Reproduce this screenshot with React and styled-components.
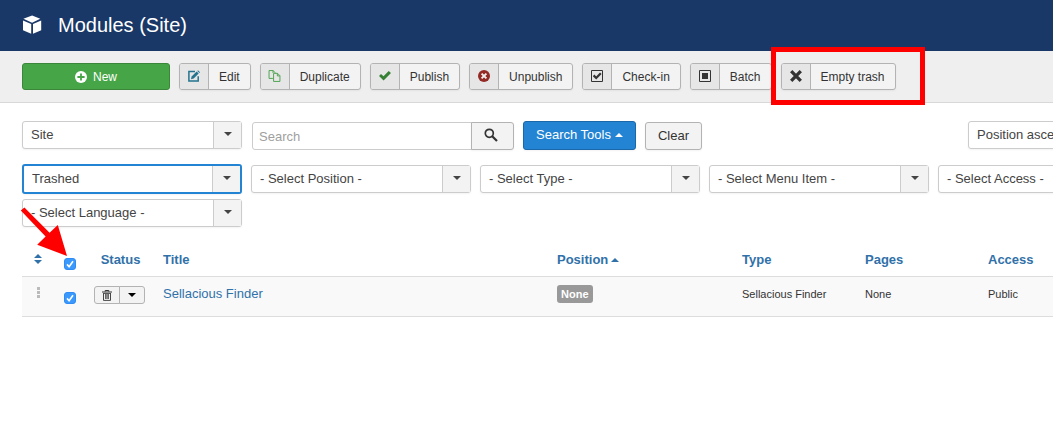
import React, { useState } from 'react'
import styled, { createGlobalStyle } from 'styled-components'

const GlobalStyle = createGlobalStyle`
    * {
        box-sizing: border-box;
    }

    html {
        overflow-x: hidden;
    }

    body {
        margin: 0;
        background: #fff;
        color: #333;
        font-family: "Liberation Sans", "Helvetica Neue", Arial, sans-serif;
        font-size: 13px;
        line-height: 18px;
    }

    button, input, select {
        font-family: inherit;
        font-size: 13px;
        margin: 0;
    }

    a {
        color: #3071a9;
        text-decoration: none;
    }

    svg {
        display: block;
    }
`

const Page = styled.div`
    min-width: 1210px;
`

const Header = styled.header`
    display: flex;
    align-items: center;
    gap: 16px;
    height: 51px;
    padding: 0 22px 2px;
    background: #1a3867;
    color: #fff;

    h1 {
        margin: 0;
        font-size: 20px;
        line-height: 24px;
        font-weight: normal;
    }
`

const Toolbar = styled.nav`
    display: flex;
    gap: 9px;
    padding: 12px 22px;
    background: #efefef;
    border-bottom: 1px solid #d8d8d8;
`

const NewButton = styled.button`
    display: flex;
    align-items: center;
    justify-content: center;
    gap: 6px;
    width: 148px;
    height: 27px;
    padding: 0;
    border: 1px solid #3a873a;
    border-radius: 3px;
    background: #46a546;
    color: #fff;
    font-size: 12px;
    cursor: pointer;
`

const ToolButton = styled.button`
    display: flex;
    height: 27px;
    padding: 0;
    border: 1px solid #b3b3b3;
    border-radius: 3px;
    background: #f3f3f3;
    color: #333;
    font-size: 12px;
    line-height: 27px;
    box-shadow: 0 1px 2px rgba(0, 0, 0, 0.05);
    cursor: pointer;
    overflow: hidden;
`

const ToolIcon = styled.span`
    display: flex;
    align-items: flex-start;
    justify-content: center;
    width: 29px;
    height: 25px;
    padding-top: 6px;
    border-right: 1px solid #b3b3b3;
    background: #e6e6e6;
    color: ${props => props.$color || '#333'};
`

const ToolLabel = styled.span`
    padding: 0 10px;
`

const Marked = styled.div`
    position: relative;

    &::after {
        content: '';
        position: absolute;
        top: -16px;
        right: -29px;
        bottom: -15px;
        left: -10px;
        border: 5px solid #f00;
        pointer-events: none;
    }
`

const Content = styled.main`
    padding: 18px 22px;
`

const SearchRow = styled.form`
    display: flex;
    align-items: flex-start;
    gap: 10px;
`

const SearchGroup = styled.div`
    display: flex;
    align-items: flex-end;
    gap: 9px;
    margin-right: auto;
`

const SearchBox = styled.div`
    display: flex;

    input {
        width: 220px;
        height: 28px;
        padding: 0 6px;
        border: 1px solid #ccc;
        border-radius: 3px 0 0 3px;
        color: #444;
        outline: none;
    }

    input::placeholder {
        color: #a0a0a0;
    }

    button {
        width: 43px;
        margin-left: -1px;
        padding: 0 0 3px 12px;
        border-radius: 0 3px 3px 0;
    }
`

const Button = styled.button`
    display: flex;
    align-items: center;
    gap: 4px;
    height: ${props => (props.$primary ? '29px' : '28px')};
    padding: 0 12px 2px;
    border: 1px solid ${props => (props.$primary ? '#1a68a8' : '#b3b3b3')};
    border-radius: 3px;
    background: ${props => (props.$primary ? '#2384d3' : '#f3f3f3')};
    color: ${props => (props.$primary ? '#fff' : '#333')};
    box-shadow: 0 1px 2px rgba(0, 0, 0, 0.05);
    cursor: pointer;
`

const Caret = styled.span`
    display: inline-block;
    border: 4px solid transparent;
    ${props => (props.$up
        ? 'border-top: 0; border-bottom-color: currentColor;'
        : 'border-bottom: 0; border-top-color: currentColor;')}
`

const Filters = styled.div`
    display: flex;
    flex-wrap: wrap;
    align-items: center;
    gap: 5px 9px;
    margin-top: 14px;
`

const SelectWrap = styled.div`
    display: grid;
    width: 220px;
    height: ${props => (props.$active ? '30px' : '28px')};
    border: ${props => (props.$active ? '2px solid #2384d3' : '1px solid #ccc')};
    border-radius: 3px;
    background: #fff;
    color: #444;
    box-shadow: 0 1px 2px rgba(0, 0, 0, 0.05);

    select {
        grid-area: 1 / 1;
        width: 100%;
        padding: 0 36px 2px 8px;
        border: 0;
        background: none;
        color: inherit;
        appearance: none;
        outline: none;
    }
`

const SelectArrow = styled.span`
    grid-area: 1 / 1;
    justify-self: end;
    display: flex;
    align-items: center;
    justify-content: center;
    width: 28px;
    padding-bottom: 2px;
    border-left: 1px solid #ccc;
    background: #f3f3f3;
    pointer-events: none;
`

const TableArea = styled.div`
    position: relative;
    margin-top: 15px;
`

const ArrowMark = styled.svg`
    position: absolute;
    top: -37px;
    left: -4px;
    pointer-events: none;
`

const Table = styled.table`
    width: 100%;
    table-layout: fixed;
    border-collapse: separate;
    border-spacing: 0;

    th, td {
        padding: 8px 8px 0;
        text-align: left;
        vertical-align: top;
        border-bottom: 1px solid #ddd;
    }

    th {
        height: 35px;
        padding-top: 9px;
    }

    td {
        height: 40px;
        background: #f9f9f9;
    }
`

const Col = styled.col`
    width: ${props => props.$width};
`

const Centered = styled.div`
    display: flex;
    justify-content: center;
`

const SortIcon = styled.button`
    display: flex;
    flex-direction: column;
    align-items: center;
    gap: 2px;
    padding: 3px 0 0;
    border: 0;
    background: none;
    color: #3071a9;
    cursor: pointer;
`

const SortLink = styled.a`
    display: inline-flex;
    align-items: center;
    gap: 3px;
`

const Handle = styled.span`
    display: flex;
    flex-direction: column;
    gap: 1px;
    padding-top: 2px;

    i {
        width: 3px;
        height: 3px;
        background: #bbb;
    }
`

const Check = styled.label`
    display: grid;
    width: 12px;
    height: 12px;
    margin-top: 7px;

    input {
        grid-area: 1 / 1;
        width: 12px;
        height: 12px;
        border: 1px solid #aaa;
        border-radius: 3px;
        background: #fff;
        appearance: none;
    }

    input:checked {
        border-color: #2f8bf5;
        background: #3b99fc;
    }

    svg {
        grid-area: 1 / 1;
        pointer-events: none;
    }
`

const StatusGroup = styled.div`
    display: flex;
    padding-top: 1px;

    button {
        display: flex;
        align-items: center;
        justify-content: center;
        width: 26px;
        height: 18px;
        padding: 0;
        border: 1px solid #b3b3b3;
        border-radius: 3px 0 0 3px;
        background: #f3f3f3;
        color: #333;
        cursor: pointer;
    }

    button + button {
        margin-left: -1px;
        border-radius: 0 3px 3px 0;
        color: #000;
    }
`

const Badge = styled.span`
    display: inline-block;
    padding: 0 4px;
    border-radius: 3px;
    background: #999;
    color: #fff;
    font-size: 11px;
    font-weight: bold;
`

const Small = styled.span`
    font-size: 11px;
`

const CubeIcon = () => (
    <svg width='20' height='20' viewBox='0 0 20 20' fill='#fff'>
        <path d='M10.1.6 18.3 3.8 10.1 7.8 1.4 3.8Z' />
        <path d='M1 5.4 9.2 9V18.8L1 15.2Z' />
        <path d='M19.2 5.4V15.2L11 18.8V9Z' />
    </svg>
)

const PlusIcon = () => (
    <svg width='12' height='12' viewBox='0 0 12 12'>
        <circle cx='6' cy='6' r='6' fill='#fff' />
        <path d='M6 2.4V9.6M2.4 6H9.6' stroke='#46a546' strokeWidth='1.8' />
    </svg>
)

const EditIcon = () => (
    <svg width='12' height='12' viewBox='0 0 12 12' fill='none'>
        <path d='M7 1.4H.9V11.1H10.2V6.2' stroke='currentColor' strokeWidth='1.5' />
        <path d='M3 9.2 3.6 6.4 8.6 1.5 10.7 3.6 5.7 8.6Z' fill='currentColor' />
        <path d='M9.3.9 10 .2 12 2.2 11.3 2.9Z' fill='currentColor' />
    </svg>
)

const CopyIcon = () => (
    <svg width='13' height='12' viewBox='0 0 13 13' fill='none' stroke='currentColor'>
        <path d='M4.8 9.1H.6V.6H4.9L7.4 3V3.4M4.9.6V3.2' />
        <path d='M5.5 3.6H9.8L12.4 6.2V12.4H5.5ZM9.6 3.8V6.4H12.2' />
    </svg>
)

const TickIcon = () => (
    <svg width='12' height='12' viewBox='0 0 12 12' fill='currentColor'>
        <path d='M0 6 2 4 4.5 6.3 9.7 1 12 3 4.6 10.6Z' />
    </svg>
)

const CancelIcon = () => (
    <svg width='12' height='12' viewBox='0 0 12 12'>
        <circle cx='6' cy='6' r='6' fill='currentColor' />
        <path d='M3.6 3.6 8.4 8.4M8.4 3.6 3.6 8.4' stroke='#eee' strokeWidth='2' />
    </svg>
)

const CheckinIcon = () => (
    <svg width='12' height='12' viewBox='0 0 12 12' fill='none' stroke='currentColor'>
        <path d='M.5.5H11.5V11.5H.5Z' />
        <path d='M2.6 5.4 5.2 8 9.8 3.2' strokeWidth='2.2' />
    </svg>
)

const BatchIcon = () => (
    <svg width='12' height='12' viewBox='0 0 12 12' fill='none' stroke='currentColor'>
        <path d='M.5.5H11.5V11.5H.5Z' />
        <path d='M3 3H9V9H3Z' fill='currentColor' stroke='none' />
    </svg>
)

const CrossIcon = () => (
    <svg width='12' height='12' viewBox='0 0 12 12' stroke='currentColor'>
        <path d='M1.2 1.2 10.8 10.8M10.8 1.2 1.2 10.8' strokeWidth='3.3' />
    </svg>
)

const SearchIcon = () => (
    <svg width='14' height='14' viewBox='0 0 14 14' fill='none' stroke='currentColor'>
        <circle cx='5.3' cy='5.3' r='4' strokeWidth='1.7' />
        <path d='M8.2 8.2 13 13' strokeWidth='2.2' />
    </svg>
)

const TrashIcon = () => (
    <svg width='10' height='11' viewBox='0 0 10 11' fill='none' stroke='currentColor'>
        <path d='M0 2H10M3.2 1.6V.5H6.8V1.6' />
        <path d='M1.5 3.5V10.4H8.5V3.5M3.7 4V9M5 4V9M6.3 4V9' strokeWidth='.9' />
        <path d='M1 3.5H9' strokeWidth='.8' />
    </svg>
)

const tools = [
    { label: 'Edit', icon: EditIcon, color: '#24748f' },
    { label: 'Duplicate', icon: CopyIcon, color: '#46a04a' },
    { label: 'Publish', icon: TickIcon, color: '#378137' },
    { label: 'Unpublish', icon: CancelIcon, color: '#942a25' },
    { label: 'Check-in', icon: CheckinIcon },
    { label: 'Batch', icon: BatchIcon },
]

const filters = [
    { name: 'state', label: 'Status', text: 'Trashed', active: true },
    { name: 'position', label: 'Position', text: '- Select Position -' },
    { name: 'module', label: 'Type', text: '- Select Type -' },
    { name: 'menuitem', label: 'Menu Item', text: '- Select Menu Item -' },
    { name: 'access', label: 'Access', text: '- Select Access -' },
    { name: 'language', label: 'Language', text: '- Select Language -' },
]

function Tool ({ label, icon: Icon, color }) {
    return (
        <ToolButton type='button'>
            <ToolIcon $color={color}><Icon /></ToolIcon>
            <ToolLabel>{label}</ToolLabel>
        </ToolButton>
    )
}

function Select ({ name, label, text, active }) {
    return (
        <SelectWrap $active={active}>
            <select name={name} aria-label={label}>
                <option>{text}</option>
            </select>
            <SelectArrow><Caret /></SelectArrow>
        </SelectWrap>
    )
}

function CheckBox ({ label, checked, onChange }) {
    return (
        <Check>
            <input
                type='checkbox'
                aria-label={label}
                checked={checked}
                onChange={onChange}
            />
            {checked && (
                <svg width='12' height='12' viewBox='0 0 12 12' fill='none' stroke='#fff'>
                    <path d='M3 6.4 5.1 8.7 9 3.2' strokeWidth='1.6' />
                </svg>
            )}
        </Check>
    )
}

function App () {
    const [checked, setChecked] = useState(true)
    const [search, setSearch] = useState('')

    const onCheck = evt => setChecked(evt.target.checked)

    return (
        <Page>
            <GlobalStyle />
            <Header>
                <CubeIcon />
                <h1>Modules (Site)</h1>
            </Header>

            <Toolbar>
                <NewButton type='button'><PlusIcon />New</NewButton>
                {tools.map(tool => <Tool key={tool.label} {...tool} />)}
                <Marked>
                    <Tool label='Empty trash' icon={CrossIcon} />
                </Marked>
            </Toolbar>

            <Content>
                <SearchRow onSubmit={evt => evt.preventDefault()}>
                    <Select name='client' label='Client' text='Site' />
                    <SearchGroup>
                        <SearchBox>
                            <input
                                type='text'
                                name='search'
                                aria-label='Search'
                                placeholder='Search'
                                value={search}
                                onChange={evt => setSearch(evt.target.value)}
                            />
                            <Button aria-label='Submit search'><SearchIcon /></Button>
                        </SearchBox>
                        <Button type='button' $primary>Search Tools<Caret $up /></Button>
                        <Button type='button' onClick={() => setSearch('')}>Clear</Button>
                    </SearchGroup>
                    <Select name='ordering' label='Sort by' text='Position ascending' />
                </SearchRow>

                <Filters>
                    {filters.map(filter => <Select key={filter.name} {...filter} />)}
                </Filters>

                <TableArea>
                    <Table>
                        <colgroup>
                            <Col $width='32px' />
                            <Col $width='32px' />
                            <Col $width='69px' />
                            <Col />
                            <Col $width='185px' />
                            <Col $width='123px' />
                            <Col $width='123px' />
                            <Col $width='208px' />
                        </colgroup>
                        <thead>
                            <tr>
                                <th>
                                    <Centered>
                                        <SortIcon type='button' aria-label='Ordering'>
                                            <Caret $up />
                                            <Caret />
                                        </SortIcon>
                                    </Centered>
                                </th>
                                <th>
                                    <Centered>
                                        <CheckBox label='Check all' checked={checked} onChange={onCheck} />
                                    </Centered>
                                </th>
                                <th><Centered><a href='#status'>Status</a></Centered></th>
                                <th><a href='#title'>Title</a></th>
                                <th><SortLink href='#position'>Position<Caret $up /></SortLink></th>
                                <th><a href='#type'>Type</a></th>
                                <th><a href='#pages'>Pages</a></th>
                                <th><a href='#access'>Access</a></th>
                            </tr>
                        </thead>
                        <tbody>
                            <tr>
                                <td><Centered><Handle><i /><i /><i /></Handle></Centered></td>
                                <td>
                                    <Centered>
                                        <CheckBox label='Select Sellacious Finder' checked={checked} onChange={onCheck} />
                                    </Centered>
                                </td>
                                <td>
                                    <StatusGroup>
                                        <button type='button' aria-label='Trashed'><TrashIcon /></button>
                                        <button type='button' aria-label='More actions'><Caret /></button>
                                    </StatusGroup>
                                </td>
                                <td><a href='#module'>Sellacious Finder</a></td>
                                <td><Badge>None</Badge></td>
                                <td><Small>Sellacious Finder</Small></td>
                                <td><Small>None</Small></td>
                                <td><Small>Public</Small></td>
                            </tr>
                        </tbody>
                    </Table>
                    <ArrowMark width='50' height='54' viewBox='18 205 50 54' fill='#f00'>
                        <path d='M20.8 210.6 24.4 207.4 49.6 232.8 57.8 225 67 256 37.2 244.8 45.6 236.6Z' />
                    </ArrowMark>
                </TableArea>
            </Content>
        </Page>
    )
}

export default App
